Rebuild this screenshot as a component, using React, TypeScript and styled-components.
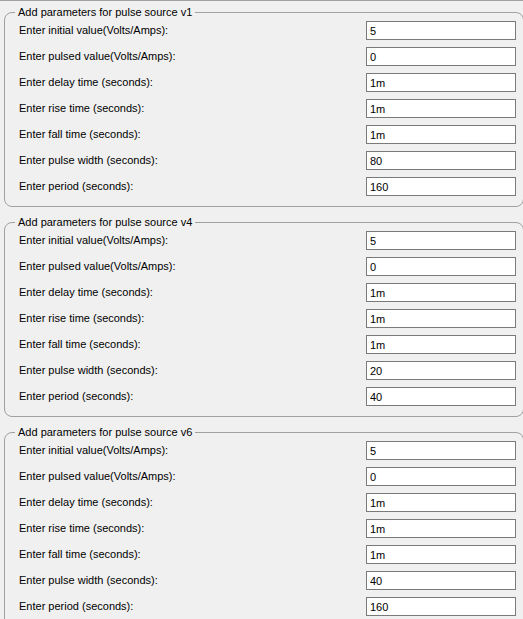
import { createGlobalStyle } from "styled-components";
import styled from "styled-components";

const GlobalStyle = createGlobalStyle`
  html, body {
    margin: 0;
    padding: 0;
    background: #f0f0f0;
    overflow: hidden;
  }
  body {
    font-family: "Liberation Sans", Arial, sans-serif;
    font-size: 11px;
    color: #000;
  }
`;

type Source = {
  name: string;
  values: string[];
};

const Labels = [
  "Enter initial value(Volts/Amps):",
  "Enter pulsed value(Volts/Amps):",
  "Enter delay time (seconds):",
  "Enter rise time (seconds):",
  "Enter fall time (seconds):",
  "Enter pulse width (seconds):",
  "Enter period (seconds):",
];

const Sources: Source[] = [
  { name: "v1", values: ["5", "0", "1m", "1m", "1m", "80", "160"] },
  { name: "v4", values: ["5", "0", "1m", "1m", "1m", "20", "40"] },
  { name: "v6", values: ["5", "0", "1m", "1m", "1m", "40", "160"] },
];

const App = () => {
  return (
    <>
      <GlobalStyle />
      <Page>
        {Sources.map((source) => (
          <Group key={source.name}>
            <Title>Add parameters for pulse source {source.name}</Title>
            <Rows>
              {Labels.map((label, index) => (
                <Row key={label}>
                  <Label>{label}</Label>
                  <Field defaultValue={source.values[index]} />
                </Row>
              ))}
            </Rows>
          </Group>
        ))}
      </Page>
    </>
  );
};

export default App;

const Page = styled.div`
  width: 523px;
  height: 619px;
  box-sizing: border-box;
  border-top: 1px solid #a0a0a0;
  padding: 5px 0 0 4px;
  display: flex;
  flex-direction: column;
  gap: 9px;
  overflow: hidden;
`;

const Group = styled.fieldset`
  width: 520px;
  box-sizing: border-box;
  margin: 0;
  padding: 2px 7px 10px 14px;
  border: 1px solid #a0a0a0;
  border-radius: 8px;
  min-width: 0;
`;

const Title = styled.legend`
  margin-left: -4px;
  padding: 0 3px;
  line-height: 13px;
  font-size: 11px;
`;

const Rows = styled.div`
  display: flex;
  flex-direction: column;
  gap: 7px;
`;

const Row = styled.div`
  display: grid;
  grid-template-columns: 1fr 150px;
  align-items: center;
  height: 19px;
`;

const Label = styled.span`
  white-space: nowrap;
  line-height: 13px;
`;

const Field = styled.input`
  box-sizing: border-box;
  width: 150px;
  height: 19px;
  margin: 0;
  padding: 0 3px;
  border: 1px solid #7a7a7a;
  border-radius: 0;
  background: #fff;
  font-family: "Liberation Sans", Arial, sans-serif;
  font-size: 11px;
  color: #000;
  outline: none;
`;
